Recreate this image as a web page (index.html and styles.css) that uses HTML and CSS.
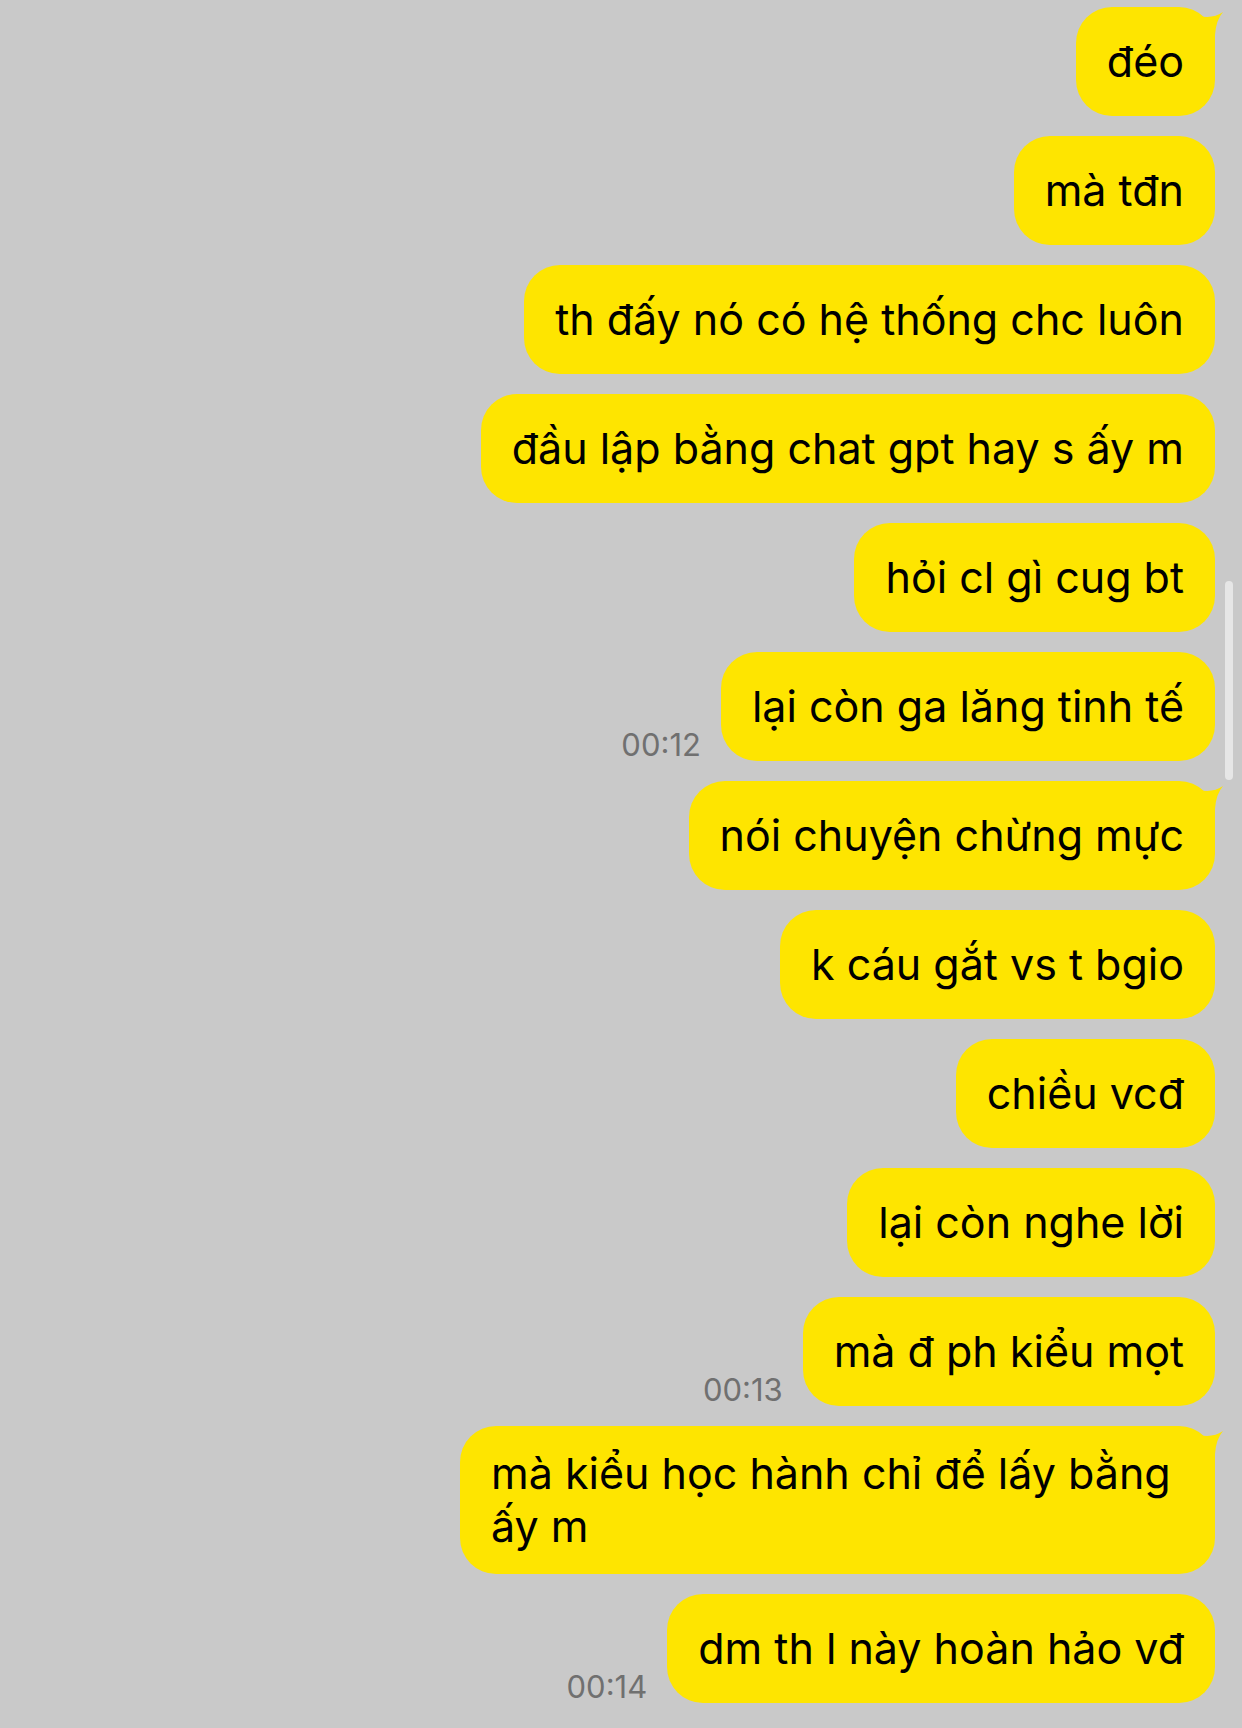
FILE: index.html
```html
<!DOCTYPE html>
<html lang="vi">
<head>
    <meta charset="UTF-8">
    <meta name="viewport" content="width=device-width, initial-scale=1.0">
    <title>Chat</title>
    <link rel="stylesheet" href="styles.css">
</head>
<body>
    <main class="chat">
        <div class="row"><div class="bubble first">đéo</div></div>
        <div class="row"><div class="bubble">mà tđn</div></div>
        <div class="row"><div class="bubble">th đấy nó có hệ thống chc luôn</div></div>
        <div class="row"><div class="bubble">đầu lập bằng chat gpt hay s ấy m</div></div>
        <div class="row"><div class="bubble">hỏi cl gì cug bt</div></div>
        <div class="row"><span class="time">00:12</span><div class="bubble">lại còn ga lăng tinh tế</div></div>
        <div class="row"><div class="bubble first">nói chuyện chừng mực</div></div>
        <div class="row"><div class="bubble">k cáu gắt vs t bgio</div></div>
        <div class="row"><div class="bubble">chiều vcđ</div></div>
        <div class="row"><div class="bubble">lại còn nghe lời</div></div>
        <div class="row"><span class="time">00:13</span><div class="bubble">mà đ ph kiểu mọt</div></div>
        <div class="row"><div class="bubble first">mà kiểu học hành chỉ để lấy bằng ấy m</div></div>
        <div class="row"><span class="time">00:14</span><div class="bubble">dm th l này hoàn hảo vđ</div></div>
    </main>
    <div class="scrollbar"></div>
</body>
</html>
```

FILE: styles.css
```css
body {
    margin: 0;
    background: #c9c9c9;
    font-family: 'Inter', 'Noto Sans', sans-serif;
    color: #000;
    height: 1728px;
    overflow: hidden;
}

.chat {
    display: flex;
    flex-direction: column;
    gap: 20px;
    padding: 7px 27px 0 0;
}

.row {
    display: flex;
    justify-content: flex-end;
    align-items: flex-end;
    gap: 20px;
}

.bubble {
    position: relative;
    box-sizing: border-box;
    min-height: 109px;
    max-width: 755px;
    padding: 21px 31px;
    display: flex;
    align-items: center;
    background: #fee500;
    border-radius: 36px;
    font-size: 43px;
    line-height: 53px;
}

.bubble.first::after {
    content: "";
    position: absolute;
    top: 0;
    right: -10px;
    width: 40px;
    height: 40px;
    background: url("data:image/svg+xml,%3Csvg xmlns='http://www.w3.org/2000/svg' viewBox='0 0 40 40'%3E%3Cpath d='M14 9 Q28 12 38 5 Q31 13 30 28 L30 38 L14 38 Z' fill='%23fee500'/%3E%3C/svg%3E") no-repeat;
}

.time {
    font-size: 31px;
    line-height: 1;
    color: #707070;
    margin-bottom: 1px;
}

.scrollbar {
    position: absolute;
    top: 581px;
    left: 1225px;
    width: 8px;
    height: 199px;
    border-radius: 4px;
    background: #e6e6e6;
}
```
